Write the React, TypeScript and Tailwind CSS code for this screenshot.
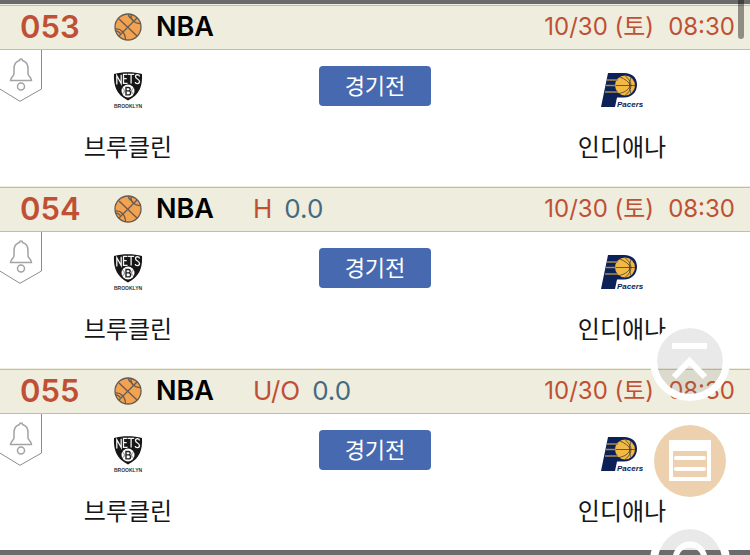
import React from "react";

interface Game {
  no: string;
  league: string;
  betType?: string;
  line?: string;
  date: string;
  time: string;
  home: string;
  away: string;
  status: string;
}

const matchup = {
  league: "NBA",
  date: "10/30 (토)",
  time: "08:30",
  home: "브루클린",
  away: "인디애나",
  status: "경기전",
};

const games: Game[] = [
  { no: "053", ...matchup },
  { no: "054", betType: "H", line: "0.0", ...matchup },
  { no: "055", betType: "U/O", line: "0.0", ...matchup },
];

const BasketballIcon = () => (
  <svg viewBox="0 0 28 28" className="h-7 w-7 shrink-0" fill="none" stroke="#665c50" strokeWidth="1.3" aria-hidden="true">
    <circle cx="14" cy="14" r="13" fill="#f2a251" />
    <path d="M5 23 23 5M5 6l18 17" />
    <path d="M14 1c.5 2 1 3 3 4.500M17 2c-.5 5 4 9 9.500 8.500" />
    <path d="M1.500 16c5-.5 10 3.500 10 11M2 18c2 0 3 1 4.500 2.500" />
  </svg>
);

const NetsLogo = () => (
  <svg viewBox="0 0 32 40" className="h-10 w-8" role="img" aria-label="Brooklyn Nets">
    <path d="M2 4C10 1.500 22 1.500 30 4c.6 11-2 20.500-14 26.500C4 24.500 1.400 15 2 4Z" fill="#161616" />
    <path
      d="M4.800 14.500V5.800l4.400 7.700V4.800M15.500 4.300h-4v9h4M11.500 8.700h3.200M16 4.300h6.200M19.100 4.300v9.200M27.500 6.500c0-2.200-4-2.500-4 0 0 2.800 4 2.300 4 5 0 2.800-4 2.800-4.300.5"
      fill="none"
      stroke="#f4f4f4"
      strokeWidth="1.300"
    />
    <circle cx="16" cy="21" r="6.500" fill="#fff" />
    <path d="M10.500 18c2.500 1.500 2.500 4.500 0 6M21.500 18c-2.500 1.500-2.500 4.500 0 6" fill="none" stroke="#555" strokeWidth=".8" />
    <path d="M14 17.500h2.500c2.300 0 2.300 3.400 0 3.400 2.800 0 2.800 4 0 4H14Zm0 3.400h2.500" fill="none" stroke="#222" strokeWidth="1.400" />
    <text x="16" y="38" textAnchor="middle" fill="#333" className="font-['Liberation_Sans',sans-serif] text-[5px] font-bold">
      BROOKLYN
    </text>
  </svg>
);

const PacersLogo = () => (
  <svg viewBox="1 0 42 38" className="h-[38px] w-[42px]" role="img" aria-label="Indiana Pacers">
    <path d="M8 2h16c8.500 0 13 5 13 11.500C37 21 32 26.500 24 26.500h-7L15 36H1Z" fill="#0b2158" />
    <circle cx="25" cy="14.500" r="10" fill="#f2b944" />
    <path
      d="M15 14.500h20M25 4.500c4 4 6 7 6 10s-2 7-6 10M20 6c5 2 9 5 10.500 8.500C28 19.500 24 21.500 19 22.500M31 6.500c-2 5-2 11 0 16"
      fill="none"
      stroke="#453a36"
      strokeWidth=".8"
    />
    <path d="M7 9h11M6 14.500h10M5 21h13" stroke="#a98c4d" strokeWidth="1.500" />
    <text x="17" y="36" fill="#0b2158" className="font-['Liberation_Sans',sans-serif] text-[8px] font-bold italic">
      Pacers
    </text>
  </svg>
);

const AlertRibbon = () => (
  <button type="button" aria-label="알림" className="absolute top-0 left-0">
    <svg viewBox="0 0 42 52" className="h-[52px] w-[42px]" fill="none">
      <path d="M-1-1h42.500v40L20 51.300-1 38.500" stroke="#8c8c8c" />
      <g stroke="#a3a3a3" strokeWidth="1.500">
        <path d="M19.500 10.500c0-2 3-2 3 0 4 1 5.500 4.500 5.500 8.500v5c0 2 3.500 3.500 3.500 6.500h-21c0-3 3.500-4.500 3.500-6.500v-5c0-4 1.500-7.500 5.500-8.500Z" />
        <circle cx="21" cy="36.500" r="3.500" />
      </g>
    </svg>
  </button>
);

const GameRow = ({ game }: { game: Game }) => {
  return (
    <article>
      <header className="flex h-[46px] items-center border-b border-[#bdbdb8] bg-[#efedde] pt-px pr-[15px] pl-5 shadow-[inset_0_1px_#efedde,inset_0_2px_#bdbdb8]">
        <span className="w-[94px] text-[31px] leading-8 font-semibold text-[#c05034]">{game.no}</span>
        <BasketballIcon />
        <span className="ml-3.5 w-[97px] text-[27px] leading-8 font-semibold text-black">{game.league}</span>
        {game.betType && (
          <span className="flex gap-3 text-[26px] leading-8">
            <span className="text-[#c05034]">{game.betType}</span>
            <span className="text-[#456a80]">{game.line}</span>
          </span>
        )}
        <span className="ml-auto flex gap-3.5 text-[24px] leading-8 text-[#c05034]">
          <span>{game.date}</span>
          <time>{game.time}</time>
        </span>
      </header>

      <div className="relative grid h-[136px] grid-cols-[1fr_238px_1fr] pt-4 text-center">
        <AlertRibbon />
        <div className="flex flex-col items-center pt-1">
          <NetsLogo />
          <p className="mt-[22px] text-[24px] leading-8 text-[#161616]">{game.home}</p>
        </div>
        <div>
          <button type="button" className="h-10 w-28 rounded bg-[#4769b0] text-[22px] leading-8 text-white">
            {game.status}
          </button>
        </div>
        <div className="flex flex-col items-center pt-1">
          <div className="flex h-10 items-center">
            <PacersLogo />
          </div>
          <p className="mt-[22px] text-[24px] leading-8 text-[#161616]">{game.away}</p>
        </div>
      </div>
    </article>
  );
};

/* Quick menu pinned over the list */
const QuickMenu = () => (
  <nav aria-label="바로가기" className="fixed top-[321px] right-5 flex flex-col items-center gap-6">
    <button type="button" aria-label="맨 위로" className="h-20 w-20 rounded-full border-[7px] border-white bg-[#78787829] bg-clip-padding">
      <svg viewBox="0 0 66 66" className="h-full w-full" fill="none" stroke="#fff" strokeWidth="6">
        <path d="M15 18h35M17 49l15.500-16L48 49" />
      </svg>
    </button>
    <button type="button" aria-label="구매 내역" className="h-[72px] w-[72px] rounded-full bg-[#edd1ae]">
      <svg viewBox="0 0 72 72" className="h-full w-full" aria-hidden="true">
        <path d="M15 15h42v41H15Z" fill="#fff" />
        <path d="M19 26h34v26H19Z" fill="#edd1ae" />
        <path d="M22 33h28M22 44h28" stroke="#fff" strokeWidth="4" strokeLinecap="round" />
      </svg>
    </button>
    <button type="button" aria-label="새로고침" className="h-20 w-20 rounded-full border-[8px] border-white bg-[#78787829] bg-clip-padding">
      <svg viewBox="0 0 64 64" className="h-full w-full" fill="none" stroke="#fff" strokeWidth="6">
        <circle cx="32" cy="30" r="14.500" />
      </svg>
    </button>
  </nav>
);

const App = () => {
  return (
    <main className="relative bg-white font-['Inter','Noto_Sans_CJK_KR',sans-serif]">
      <div className="h-1 bg-[#6b6b6b]" />
      {games.map((game) => (
        <GameRow key={game.no} game={game} />
      ))}
      <div className="h-[5px] bg-[#6b6b6b]" />
      <QuickMenu />
      <div className="absolute top-0 right-[6px] h-[39px] w-[6px] rounded-b-full bg-black/40" />
    </main>
  );
};

export default App;
